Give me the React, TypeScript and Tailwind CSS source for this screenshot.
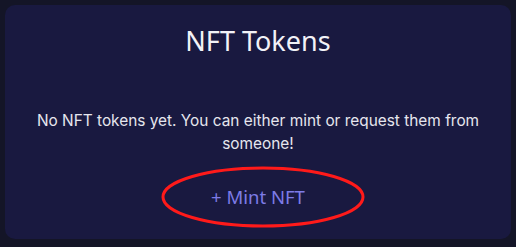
import React from "react";

export default function App() {
  return (
    <div className="w-[516px] h-[247px] bg-[#141527] p-[5px] pb-[8px]">
      <div className="relative h-full w-full rounded-[10px] bg-[#191940] flex flex-col items-center">
        <h1 className="mt-[18px] text-[27px] leading-[36px] text-[#f2f2f7] font-['Noto_Sans',sans-serif]">
          NFT Tokens
        </h1>
        <p className="mt-[50px] px-[24px] text-center text-[15.4px] leading-[23px] text-[#e6e6ee] font-['Inter',sans-serif]">
          No NFT tokens yet. You can either mint or request them from someone!
        </p>
        <button className="mt-[29px] text-[18.5px] leading-[26px] text-[#7d7be6] font-['Noto_Sans',sans-serif]">
          + Mint NFT
        </button>
        <svg className="absolute left-[155px] top-[160px]" width="210" height="66" viewBox="0 0 210 66">
          <ellipse cx="103" cy="32" rx="100" ry="29" fill="none" stroke="#ff1a1a" strokeWidth="3" />
        </svg>
      </div>
    </div>
  );
}
